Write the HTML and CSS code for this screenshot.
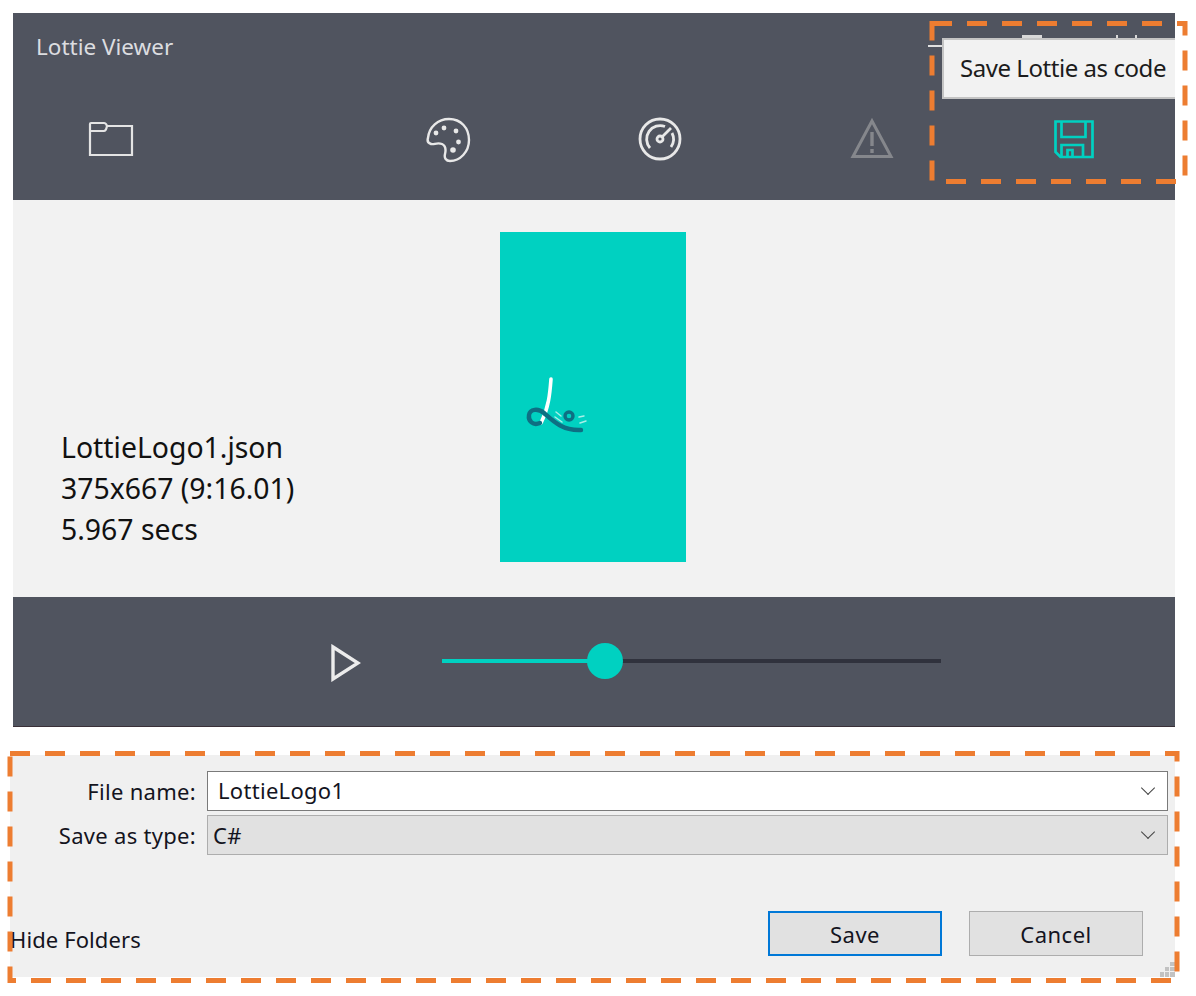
FILE: index.html
```html
<!DOCTYPE html>
<html>
  <head>
    <meta charset="UTF-8">
    <title>Lottie Viewer</title>
    <link rel="stylesheet" href="styles.css">
  </head>
  <body>
  <div class="window">
    <div class="topbar">
      <div class="title">Lottie Viewer</div>
      <div class="toolbar">
        <svg class="ic ic-folder" viewBox="0 0 46 36"><path d="M2 34V3Q2 2 3 2H16Q18 2 19 5H44V34ZM2 10H16Q18 10 19 5"/></svg>
        <svg class="ic ic-palette" viewBox="0 0 46 46"><path d="M3 21C4 10 13 2 24 2C36 2 44 11 44 23C44 35 35 44 25 44C21 44 19 41 20 37C21 33 21 29 17 27C12 25 9 28 6 27C3 26 2 24 3 21Z"/><circle class="dot" cx="11" cy="16" r="2.4"/><circle class="dot" cx="19" cy="11" r="2.4"/><circle class="dot" cx="31" cy="14" r="2.4"/><circle class="dot" cx="33.5" cy="25" r="2.4"/><circle class="dot" cx="28" cy="33" r="2.8"/></svg>
        <svg class="ic ic-gauge" viewBox="0 0 44 44"><circle cx="22" cy="22" r="20"/><path d="M12 31A13.5 13.5 0 0 1 27 9.5M34 16A13.5 13.5 0 0 1 33 30M24 20L33 11"/><circle cx="22" cy="22" r="3"/></svg>
        <svg class="ic ic-warn" viewBox="0 0 44 42"><path d="M22 4L41 39.5H3Z"/><path class="warn-mark" d="M22 15V29M22 32V36"/></svg>
        <svg class="ic ic-save" viewBox="0 0 42 40"><path d="M2.5 2.5H39.5V38H7.5L2.5 33Z"/><path d="M8.5 2.5V18H32.5V2.5M8.5 38V26H30V38M14.5 38V31H19.5V38"/></svg>
      </div>
      <div class="winctl"></div>
      <div class="winbit winbit-max"></div>
      <div class="winbit winbit-x1"></div>
      <div class="winbit winbit-x2"></div>
      <div class="tooltip">Save Lottie as code</div>
    </div>
    <div class="content">
      <div class="info">
        <div>LottieLogo1.json</div>
        <div>375x667 (9:16.01)</div>
        <div>5.967 secs</div>
      </div>
      <div class="stage">
        <svg class="logo" viewBox="0 0 186 330">
          <path class="logo-white" d="M51 147C50 160 49 175 41 191"/>
          <path class="logo-dark" d="M40 191C33 194 28 189 29 183C30 177 38 176 44 181C52 188 62 199 81 198"/>
          <circle class="logo-dark logo-ball" cx="69" cy="184" r="4"/>
          <path class="logo-tick" d="M55 185L62 190M56 180L61 184M79 185L84 184M80 191L86 189"/>
        </svg>
      </div>
    </div>
    <div class="player">
      <svg class="play" viewBox="0 0 30 38"><path d="M2 3L27 19L2 35Z"/></svg>
      <div class="slider">
        <div class="slider-fill"></div>
        <div class="slider-thumb"></div>
      </div>
    </div>
  </div>

  <div class="dialog">
    <div class="row">
      <label class="lbl">File name:</label>
      <div class="field field-input">LottieLogo1<span class="chev"></span></div>
    </div>
    <div class="row">
      <label class="lbl">Save as type:</label>
      <div class="field field-select">C#<span class="chev"></span></div>
    </div>
    <div class="actions">
      <span class="hide">Hide Folders</span>
      <div class="btn btn-main">Save</div>
      <div class="btn">Cancel</div>
    </div>
    <svg class="grip" viewBox="0 0 15 15"><path d="M10 0h5v4h-5zM5 5h4v4H5zM10 5h5v4h-5zM0 10h4v5H0zM5 10h4v5H5zM10 10h5v5h-5z"/></svg>
  </div>

  <svg class="marks" viewBox="0 0 1196 996">
    <rect x="932" y="23.5" width="253" height="158"/>
    <rect x="10" y="753.5" width="1167" height="227"/>
  </svg>
  </body>
</html>
```

FILE: styles.css
```css
body {
  margin: 0;
  background-color: white;
  font-family: "Noto Sans", "Open Sans", sans-serif;
  color: #1c1c1c;
}

.window {
  margin-left: 13px;
  margin-top: 13px;
  width: 1162px;
  height: 714px;
  display: flex;
  flex-direction: column;
}

/* top part */
.topbar {
  height: 187px;
  background-color: #50545f;
  position: relative;
  overflow: hidden;
}
.title {
  padding-left: 23px;
  padding-top: 19px;
  height: 30px;
  line-height: 30px;
  font-size: 22.5px;
  color: #dcdde0;
}
.toolbar {
  position: relative;
  height: 138px;
}
.ic {
  position: absolute;
  fill: none;
  stroke-width: 2.4;
}
.ic-folder { left: 75px; top: 59px; width: 46px; height: 36px; stroke: #e4e4e4; stroke-width: 2.2; }
.ic-palette { left: 412px; top: 55px; width: 46px; height: 46px; stroke: #e8e8e8; }
.ic-palette .dot { fill: #e8e8e8; stroke: none; }
.ic-gauge { left: 625px; top: 55px; width: 44px; height: 44px; stroke: #e8e8e8; stroke-width: 2.8; }
.ic-warn { left: 837px; top: 55px; width: 44px; height: 42px; stroke: #85878c; stroke-width: 3; }
.ic-warn .warn-mark { stroke-width: 3.4; }
.ic-save { left: 1040px; top: 57px; width: 42px; height: 40px; stroke: #00d1c1; stroke-width: 2.7; }

.winctl {
  position: absolute;
  left: 915px;
  top: 32px;
  width: 20px;
  height: 2px;
  background-color: #e0e0e0;
}
.winbit {
  position: absolute;
  top: 22px;
  height: 4px;
  background-color: #d8d8d8;
}
.winbit-max { left: 1009px; width: 20px; }
.winbit-x1 { left: 1103px; width: 2px; }
.winbit-x2 { left: 1122px; width: 2px; }
.tooltip {
  position: absolute;
  left: 929px;
  top: 25px;
  width: 233px;
  height: 61px;
  box-sizing: border-box;
  padding-left: 16px;
  line-height: 56px;
  font-size: 24px;
  letter-spacing: -0.45px;
  background-color: #f2f2f2;
  border: 2px solid #c4c4c4;
  border-right: none;
  white-space: nowrap;
}

/* middle part */
.content {
  height: 397px;
  background-color: #f2f2f2;
  position: relative;
}
.info {
  position: absolute;
  left: 48px;
  top: 227px;
  font-size: 28.4px;
  line-height: 41px;
  color: #111;
}
.stage {
  position: absolute;
  left: 487px;
  top: 32px;
  width: 186px;
  height: 330px;
  background-color: #00d1c1;
}
.logo { display: block; width: 186px; height: 330px; fill: none; stroke-linecap: round; }
.logo-white { stroke: white; stroke-width: 3.6; }
.logo-dark { stroke: #0e6f83; stroke-width: 4.4; }
.logo-ball { stroke-width: 3.4; }
.logo-tick { stroke: #a8efe8; stroke-width: 1.5; }

/* play bar */
.player {
  height: 130px;
  background-color: #50545f;
  border-bottom: 1px solid #3a3038;
  box-sizing: border-box;
  display: flex;
  align-items: center;
  padding-left: 318px;
  padding-bottom: 1px;
}
.play { width: 30px; height: 38px; fill: none; stroke: #ececec; stroke-width: 3.4; margin-top: 3px; }
.slider {
  margin-left: 81px;
  width: 499px;
  height: 4px;
  background-color: #30323d;
  position: relative;
  display: flex;
  align-items: center;
}
.slider-fill { width: 163px; height: 4px; background-color: #00d1c1; }
.slider-thumb {
  position: absolute;
  left: 145px;
  top: -16px;
  width: 36px;
  height: 36px;
  border-radius: 50%;
  background-color: #00d1c1;
}

/* save dialog */
.dialog {
  margin-top: 28px;
  margin-left: 10px;
  width: 1165px;
  height: 222px;
  box-sizing: border-box;
  background-color: #f0f0f0;
  padding-top: 16px;
  font-size: 22px;
  position: relative;
  color: #14141e;
}
.row {
  display: flex;
  align-items: center;
  margin-bottom: 4px;
}
.lbl {
  width: 186px;
  text-align: right;
  letter-spacing: 0.3px;
  margin-right: 11px;
}
.field {
  width: 961px;
  height: 40px;
  box-sizing: border-box;
  line-height: 36px;
  position: relative;
  letter-spacing: 0.3px;
}
.field-input { background-color: white; border: 1px solid #7a7a7a; padding-left: 10px; }
.field-select { background-color: #e1e1e1; border: 1px solid #adadad; padding-left: 5px; line-height: 38px; }
.chev {
  position: absolute;
  right: 14px;
  top: 11px;
  width: 9px;
  height: 9px;
  border-right: 1.5px solid #444;
  border-bottom: 1.5px solid #444;
  transform: rotate(45deg);
}
.actions {
  display: flex;
  align-items: center;
  margin-top: 56px;
  padding-right: 32px;
  justify-content: flex-end;
}
.hide {
  margin-right: auto;
  padding-top: 10px;
  letter-spacing: 0.1px;
}
.btn {
  width: 174px;
  height: 45px;
  box-sizing: border-box;
  background-color: #e1e1e1;
  border: 1px solid #adadad;
  text-align: center;
  line-height: 44px;
  margin-left: 27px;
  letter-spacing: 0.5px;
}
.btn-main { border: 2px solid #0078d7; line-height: 42px; }
.grip {
  position: absolute;
  right: 0;
  bottom: 0;
  width: 15px;
  height: 15px;
  fill: #c2c2c2;
}

.marks {
  position: absolute;
  left: 0;
  top: 0;
  width: 1196px;
  height: 996px;
  fill: none;
  stroke: #ed7d31;
  stroke-width: 5;
  stroke-dasharray: 20 15;
}
```
